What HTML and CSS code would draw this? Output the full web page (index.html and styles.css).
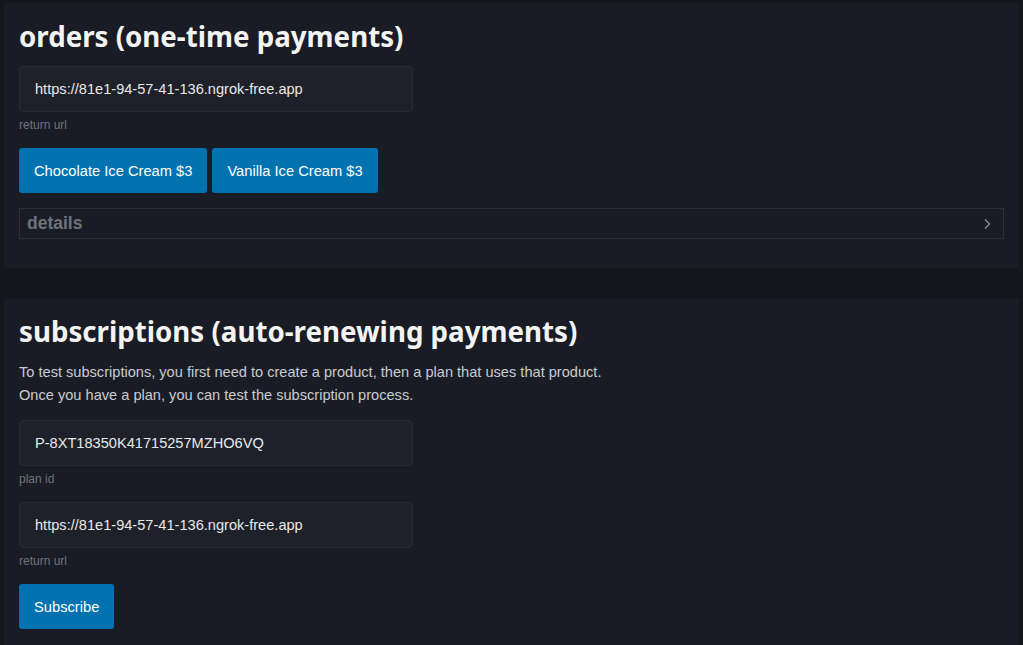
FILE: index.html
```html
<!DOCTYPE html>
<html>
<head>
<meta charset="utf-8">
<link rel="stylesheet" href="styles.css">
</head>
<body>
<main class="page">
  <section class="card">
    <h1 class="title">orders (one-time payments)</h1>
    <div class="field">
      <input class="input" type="text" value="https://81e1-94-57-41-136.ngrok-free.app">
      <div class="hint">return url</div>
    </div>
    <div class="buttons">
      <button class="btn">Chocolate Ice Cream $3</button>
      <button class="btn">Vanilla Ice Cream $3</button>
    </div>
    <div class="details">
      <span class="details-label">details</span>
      <svg class="chev" width="10" height="12" viewBox="0 0 10 12"><path d="M3 1.5 L7.5 6 L3 10.5" fill="none" stroke="#8a8e96" stroke-width="1.3"/></svg>
    </div>
  </section>
  <section class="card">
    <h1 class="title">subscriptions (auto-renewing payments)</h1>
    <p class="desc">To test subscriptions, you first need to create a product, then a plan that uses that product.<br>Once you have a plan, you can test the subscription process.</p>
    <div class="field">
      <input class="input" type="text" value="P-8XT18350K41715257MZHO6VQ">
      <div class="hint">plan id</div>
    </div>
    <div class="field">
      <input class="input" type="text" value="https://81e1-94-57-41-136.ngrok-free.app">
      <div class="hint">return url</div>
    </div>
    <div class="buttons">
      <button class="btn">Subscribe</button>
    </div>
  </section>
</main>
</body>
</html>
```
FILE: styles.css
```css
html, body {
  margin: 0;
  padding: 0;
  background: #13161d;
}
body {
  font-family: "Liberation Sans", Arial, sans-serif;
  color: #d4d6da;
}
.page {
  padding: 3px 4px;
  display: flex;
  flex-direction: column;
  gap: 30px;
}
.card {
  background: #191c24;
  border-radius: 4px;
  padding: 15px 15px 29px;
}
.title {
  font-family: "Noto Sans", "Open Sans", sans-serif;
  font-weight: 700;
  font-size: 27.7px;
  line-height: 36px;
  color: #f3f3f3;
  margin: 0 0 12px;
}
.field {
  margin-bottom: 16px;
}
.input {
  display: block;
  box-sizing: border-box;
  width: 394px;
  height: 46px;
  padding: 0 15px;
  background: #1e2129;
  border: 1px solid #262a33;
  border-radius: 4px;
  color: #e8e9eb;
  font-family: "Liberation Sans", Arial, sans-serif;
  font-size: 14.6px;
  outline: none;
}
.hint {
  margin-top: 6px;
  font-size: 12px;
  color: #6e737c;
  line-height: 14px;
}
.buttons {
  display: flex;
  gap: 5px;
  margin-bottom: 15px;
}
.btn {
  height: 45px;
  padding: 0 15px;
  background: #0072b0;
  color: #ffffff;
  border: none;
  border-radius: 3px;
  font-family: "Liberation Sans", Arial, sans-serif;
  font-size: 14.7px;
}
.details {
  display: flex;
  align-items: center;
  justify-content: space-between;
  height: 31px;
  box-sizing: border-box;
  border: 1px solid #2b2f38;
  padding: 0 11px 0 7px;
}
.details-label {
  font-weight: 700;
  font-size: 17.5px;
  color: #6f7278;
}
.desc {
  margin: 0 0 13px;
  font-size: 14.6px;
  line-height: 23px;
  color: #c9ccd1;
}
```
